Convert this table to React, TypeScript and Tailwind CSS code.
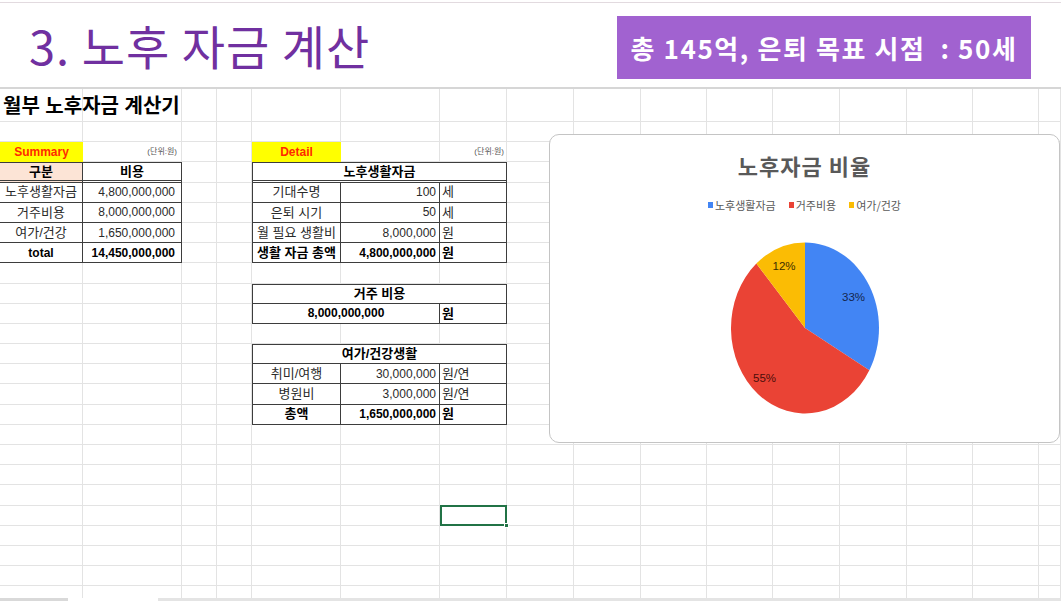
const COLS = [83, 99, 35, 35, 89, 99, 67, 67, 67, 66, 66, 67, 67, 66, 66, 22];
const ROW_COUNT = 25;

const sheetFont = { fontFamily: "'Liberation Sans', 'Noto Sans CJK KR', sans-serif" };

function Cell({ className = "", children }: { className?: string; children?: React.ReactNode }) {
    return <div className={`flex items-center overflow-hidden whitespace-nowrap ${className}`}>{children}</div>;
}

function GridLines() {
    const cells = [];
    for (let r = 0; r < ROW_COUNT; r++) {
        for (let c = 0; c < COLS.length; c++) {
            cells.push(<div key={`${r}-${c}`} className="border-r border-b border-[#e3e3e3]" />);
        }
    }
    return (
        <div className="col-start-1 row-start-1 grid grid-cols-[83px_99px_35px_35px_89px_99px_67px_67px_67px_66px_66px_67px_67px_66px_66px_22px] grid-rows-[33px_repeat(24,20.2px)]">
            {cells}
        </div>
    );
}

function PieChart() {
    return (
        <div className="absolute left-[549px] top-[45px] w-[511px] h-[309px] rounded-[10px] border border-[#c4c4c4] bg-white flex flex-col items-center">
            <div className="mt-[17px] h-[26px] leading-[26px] text-[22px] font-bold tracking-[1px] text-[#595959]" style={{ fontFamily: "'Noto Sans CJK KR', sans-serif" }}>
                노후자금 비율
            </div>
            <div className="mt-[20px] h-[14px] flex items-center gap-[13px] text-[11px] text-[#595959]" style={{ fontFamily: "'Noto Sans CJK KR', sans-serif" }}>
                <div className="flex items-center gap-[2px]">
                    <span className="w-[5px] h-[6px] bg-[#4285f4]" />
                    노후생활자금
                </div>
                <div className="flex items-center gap-[2px]">
                    <span className="w-[5px] h-[6px] bg-[#ea4335]" />
                    거주비용
                </div>
                <div className="flex items-center gap-[2px]">
                    <span className="w-[5px] h-[6px] bg-[#fbbc04]" />
                    여가/건강
                </div>
            </div>
            <svg className="mt-[29px]" width="152" height="174" viewBox="0 0 152 174">
                <path d="M76 87 L76 1.5 A74 85.5 0 0 1 140.34 129.23 Z" fill="#4285f4" />
                <path d="M76 87 L140.34 129.23 A74 85.5 0 1 1 27.35 22.57 Z" fill="#ea4335" />
                <path d="M76 87 L27.35 22.57 A74 85.5 0 0 1 76 1.5 Z" fill="#fbbc04" />
                <g fontFamily="'Liberation Sans', sans-serif" fontSize="11.5" textAnchor="middle" dominantBaseline="central">
                    <text x="124.5" y="56" fill="#14254d">33%</text>
                    <text x="35.5" y="136.5" fill="#4d0e0a">55%</text>
                    <text x="55" y="24.5" fill="#3b2d00">12%</text>
                </g>
            </svg>
        </div>
    );
}

export default function App() {
    const b = "border-[#3d3d3d]";
    return (
        <div className="w-[1061px] h-[601px] overflow-hidden bg-white flex flex-col">
            <div className="h-[3px] border-b border-[#e2dadf]" />
            <header className="h-[84px] flex items-start" style={{ fontFamily: "'Noto Sans CJK KR', sans-serif" }}>
                <h1 className="ml-[29px] mt-[10px] h-[63px] leading-[63px] text-[47px] tracking-[1px] text-[#7030a0] whitespace-pre">3. 노후 자금 계산</h1>
                <div className="ml-auto mr-[30px] mt-[13px] w-[414px] h-[63px] bg-[#a162d0] flex items-center justify-center text-white text-[26px] tracking-[1.6px] font-bold whitespace-pre">
                    총 145억, 은퇴 목표 시점  : 50세
                </div>
            </header>

            <div className="relative flex-1 overflow-hidden border-t-2 border-[#d6d6d6]" style={sheetFont}>
                <div className="grid">
                    <GridLines />
                    <div className="col-start-1 row-start-1 grid grid-cols-[83px_99px_35px_35px_89px_99px_67px_67px_67px_66px_66px_67px_67px_66px_66px_22px] grid-rows-[33px_repeat(24,20.2px)] text-[12px] text-[#2a2a2a]">
                        <Cell className="col-start-1 col-span-4 row-start-1 pl-[3px] text-[20px] font-bold text-black">월부 노후자금 계산기</Cell>
                        <div className="col-start-7 row-start-1 self-start -mt-[2px] h-[2px] bg-[#217346]" />

                        {/* summary */}
                        <Cell className="col-start-1 row-start-3 justify-center bg-[#ffff00] text-[#ff2a00] font-bold">Summary</Cell>
                        <Cell className="col-start-2 row-start-3 justify-end pr-[5px] text-[8px] text-[#555]">(단위:원)</Cell>
                        <Cell className={`col-start-1 row-start-4 justify-center bg-[#fce4d6] text-[13px] font-bold text-black border-t border-r border-b-[3px] border-double ${b}`}>구분</Cell>
                        <Cell className={`col-start-2 row-start-4 justify-center bg-white text-[13px] font-bold text-black border-t border-r border-b-[3px] border-double ${b}`}>비용</Cell>
                        <Cell className={`col-start-1 row-start-5 justify-center bg-white text-[13px] border-r border-b ${b}`}>노후생활자금</Cell>
                        <Cell className={`col-start-2 row-start-5 justify-end pr-[6px] bg-white border-r border-b ${b}`}>4,800,000,000</Cell>
                        <Cell className={`col-start-1 row-start-6 justify-center bg-white text-[13px] border-r border-b ${b}`}>거주비용</Cell>
                        <Cell className={`col-start-2 row-start-6 justify-end pr-[6px] bg-white border-r border-b ${b}`}>8,000,000,000</Cell>
                        <Cell className={`col-start-1 row-start-7 justify-center bg-white text-[13px] border-r border-b ${b}`}>여가/건강</Cell>
                        <Cell className={`col-start-2 row-start-7 justify-end pr-[6px] bg-white border-r border-b ${b}`}>1,650,000,000</Cell>
                        <Cell className={`col-start-1 row-start-8 justify-center bg-white font-bold text-black border-r border-b ${b}`}>total</Cell>
                        <Cell className={`col-start-2 row-start-8 justify-end pr-[6px] bg-white font-bold text-black border-r border-b ${b}`}>14,450,000,000</Cell>

                        {/* detail */}
                        <Cell className="col-start-5 row-start-3 justify-center bg-[#ffff00] text-[#ff2a00] font-bold">Detail</Cell>
                        <Cell className="col-start-7 row-start-3 justify-end pr-[3px] text-[8px] text-[#555]">(단위:원)</Cell>
                        <Cell className={`col-start-5 col-span-3 row-start-4 justify-center bg-white text-[13px] font-bold text-black border-t border-l border-r border-b-[3px] border-double ${b}`}>노후생활자금</Cell>
                        <Cell className={`col-start-5 row-start-5 justify-center bg-white text-[13px] border-l border-r border-b ${b}`}>기대수명</Cell>
                        <Cell className={`col-start-6 row-start-5 justify-end pr-[3px] bg-white border-r border-b ${b}`}>100</Cell>
                        <Cell className={`col-start-7 row-start-5 pl-[2px] bg-white text-[13px] border-r border-b ${b}`}>세</Cell>
                        <Cell className={`col-start-5 row-start-6 justify-center bg-white text-[13px] border-l border-r border-b ${b}`}>은퇴 시기</Cell>
                        <Cell className={`col-start-6 row-start-6 justify-end pr-[3px] bg-white border-r border-b ${b}`}>50</Cell>
                        <Cell className={`col-start-7 row-start-6 pl-[2px] bg-white text-[13px] border-r border-b ${b}`}>세</Cell>
                        <Cell className={`col-start-5 row-start-7 justify-center bg-white text-[13px] border-l border-r border-b ${b}`}>월 필요 생활비</Cell>
                        <Cell className={`col-start-6 row-start-7 justify-end pr-[3px] bg-white border-r border-b ${b}`}>8,000,000</Cell>
                        <Cell className={`col-start-7 row-start-7 pl-[2px] bg-white text-[13px] border-r border-b ${b}`}>원</Cell>
                        <Cell className={`col-start-5 row-start-8 justify-center bg-white text-[13px] font-bold text-black border-l border-r border-b ${b}`}>생활 자금 총액</Cell>
                        <Cell className={`col-start-6 row-start-8 justify-end pr-[3px] bg-white font-bold text-black border-r border-b ${b}`}>4,800,000,000</Cell>
                        <Cell className={`col-start-7 row-start-8 pl-[2px] bg-white text-[13px] font-bold text-black border-r border-b ${b}`}>원</Cell>

                        {/* housing */}
                        <Cell className={`col-start-5 col-span-3 row-start-10 justify-center bg-white text-[13px] font-bold text-black border ${b}`}>거주 비용</Cell>
                        <Cell className={`col-start-5 col-span-2 row-start-11 justify-center bg-white font-bold text-black border-l border-r border-b ${b}`}>8,000,000,000</Cell>
                        <Cell className={`col-start-7 row-start-11 pl-[2px] bg-white text-[13px] font-bold text-black border-r border-b ${b}`}>원</Cell>

                        {/* leisure */}
                        <Cell className={`col-start-5 col-span-3 row-start-13 justify-center bg-white text-[13px] font-bold text-black border ${b}`}>여가/건강생활</Cell>
                        <Cell className={`col-start-5 row-start-14 justify-center bg-white text-[13px] border-l border-r border-b ${b}`}>취미/여행</Cell>
                        <Cell className={`col-start-6 row-start-14 justify-end pr-[3px] bg-white border-r border-b ${b}`}>30,000,000</Cell>
                        <Cell className={`col-start-7 row-start-14 pl-[2px] bg-white text-[13px] border-r border-b ${b}`}>원/연</Cell>
                        <Cell className={`col-start-5 row-start-15 justify-center bg-white text-[13px] border-l border-r border-b ${b}`}>병원비</Cell>
                        <Cell className={`col-start-6 row-start-15 justify-end pr-[3px] bg-white border-r border-b ${b}`}>3,000,000</Cell>
                        <Cell className={`col-start-7 row-start-15 pl-[2px] bg-white text-[13px] border-r border-b ${b}`}>원/연</Cell>
                        <Cell className={`col-start-5 row-start-16 justify-center bg-white text-[13px] font-bold text-black border-l border-r border-b ${b}`}>총액</Cell>
                        <Cell className={`col-start-6 row-start-16 justify-end pr-[3px] bg-white font-bold text-black border-r border-b ${b}`}>1,650,000,000</Cell>
                        <Cell className={`col-start-7 row-start-16 pl-[2px] bg-white text-[13px] font-bold text-black border-r border-b ${b}`}>원</Cell>

                        {/* selected cell */}
                        <div className="col-start-7 row-start-21 relative -mt-[1px] border-2 border-[#217346]">
                            <span className="absolute -right-[4px] -bottom-[4px] w-[5px] h-[5px] bg-[#217346] border border-white" />
                        </div>
                    </div>
                </div>
                <PieChart />
            </div>

            <div className="h-[3px] flex bg-[#e4e4e4]">
                <div className="w-[68px] bg-[#d9d9d9]" />
                <div className="w-[90px] bg-white" />
            </div>
        </div>
    );
}
